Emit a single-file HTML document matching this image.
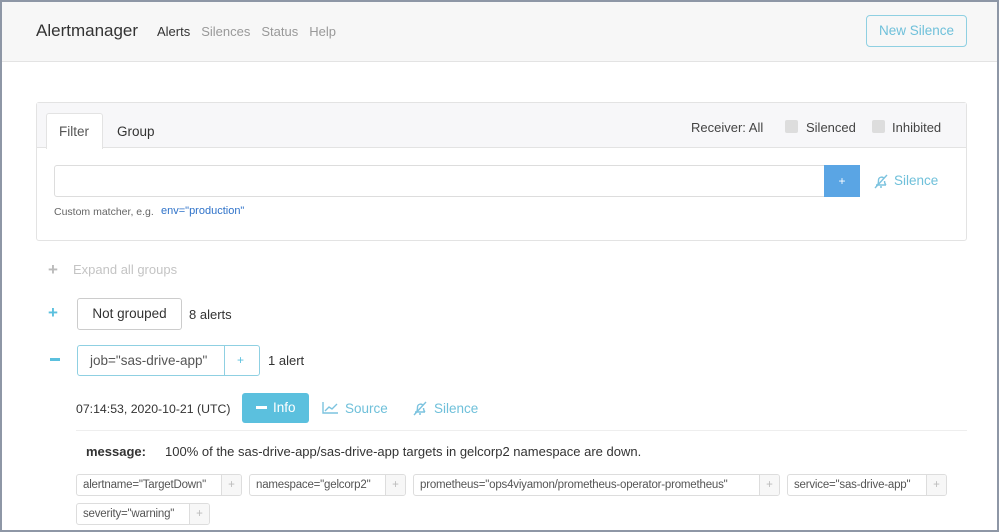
<!DOCTYPE html>
<html><head><style>
*{box-sizing:border-box;margin:0;padding:0}
body{width:999px;height:532px;overflow:hidden;background:#fff;font-family:"Liberation Sans",sans-serif;color:#333;position:relative}
.a{position:absolute;white-space:nowrap}
.frame{position:absolute;left:0;top:0;width:999px;height:532px;border:2px solid #8e97a6;pointer-events:none;z-index:9}
.lbl{position:absolute;height:22px;border:1px solid #ddd;border-radius:3px;font-size:11.5px;color:#555;display:flex;align-items:center;white-space:nowrap;overflow:hidden}
.lbl span{padding:0 6px;white-space:nowrap;letter-spacing:-0.2px}
.lbl b{font-weight:normal;color:#bbb;width:20px;flex:none;height:100%;border-left:1px solid #ddd;background:#f7f7f7;display:flex;align-items:center;justify-content:center}
</style></head><body>
<div class="frame"></div>
<div class="a" style="left:0;top:0;width:999px;height:62px;background:#f7f7f7;border-bottom:1px solid #e3e3e3"></div>
<div class="a" style="left:36px;top:21px;font-size:17px;color:#333">Alertmanager</div>
<div class="a" style="left:157px;top:24px;font-size:13px;color:#333;display:flex;gap:11px"><span>Alerts</span><span style="color:#999">Silences</span><span style="color:#999">Status</span><span style="color:#999">Help</span></div>
<div class="a" style="left:866px;top:15px;width:101px;height:32px;border:1px solid #8fd0e2;border-radius:4px;color:#6fc0da;font-size:13.5px;text-align:center;line-height:30px">New Silence</div>

<div class="a" style="left:36px;top:102px;width:931px;height:139px;border:1px solid #e3e3e3;border-radius:3px"></div>
<div class="a" style="left:37px;top:103px;width:929px;height:45px;background:#f7f7f9;border-bottom:1px solid #e3e3e3"></div>
<div class="a" style="left:46px;top:113px;width:57px;height:36px;background:#fff;border:1px solid #e3e3e3;border-bottom:none;border-radius:3px 3px 0 0"></div>
<div class="a" style="left:59px;top:124px;font-size:13.5px;color:#555">Filter</div>
<div class="a" style="left:117px;top:124px;font-size:13.5px;color:#333">Group</div>
<div class="a" style="left:691px;top:120px;font-size:13px;color:#444">Receiver: All</div>
<div class="a" style="left:785px;top:120px;width:13px;height:13px;background:#ddd;border-radius:2px"></div>
<div class="a" style="left:806px;top:120px;font-size:13px;color:#444">Silenced</div>
<div class="a" style="left:872px;top:120px;width:13px;height:13px;background:#ddd;border-radius:2px"></div>
<div class="a" style="left:892px;top:120px;font-size:13px;color:#444">Inhibited</div>
<div class="a" style="left:54px;top:165px;width:771px;height:32px;border:1px solid #ddd;border-radius:3px 0 0 3px"></div>
<div class="a" style="left:824px;top:165px;width:36px;height:32px;background:#5aa5e4;color:#fff;font-size:12px;text-align:center;line-height:32px">+</div>
<svg class="a" style="left:873px;top:173px" width="16" height="16" viewBox="0 0 16 16" fill="none" stroke="#7cc3df" stroke-width="1.4"><path d="M3 12h10M4.5 12c1-1.5 1-3 1-5a3 3 0 0 1 5.5-1.5M11.5 8c0 2 .5 3 1.5 4M7 14h2M2 15L14 2"/></svg>
<div class="a" style="left:894px;top:173px;font-size:13.5px;color:#6fc0da">Silence</div>
<div class="a" style="left:54px;top:206px;font-size:10.5px;color:#666">Custom matcher, e.g.</div>
<div class="a" style="left:161px;top:205px;font-size:11px;color:#2e72c9">env="production"</div>

<div class="a" style="left:48px;top:260px;font-size:17px;color:#bbb;font-weight:bold">+</div>
<div class="a" style="left:73px;top:262px;font-size:13px;color:#c4c4c4">Expand all groups</div>
<div class="a" style="left:48px;top:303px;font-size:17px;color:#5bc0de;font-weight:bold">+</div>
<div class="a" style="left:77px;top:298px;width:105px;height:32px;border:1px solid #ccc;border-radius:3px;font-size:13.5px;text-align:center;line-height:30px;color:#333">Not grouped</div>
<div class="a" style="left:189px;top:307px;font-size:13px">8 alerts</div>
<div class="a" style="left:50px;top:358px;width:10px;height:3px;background:#5bc0de"></div>
<div class="a" style="left:77px;top:345px;width:183px;height:31px;border:1px solid #8fd0e2;border-radius:3px"></div>
<div class="a" style="left:224px;top:345px;width:1px;height:31px;background:#8fd0e2"></div>
<div class="a" style="left:90px;top:353px;font-size:13.5px;color:#555">job="sas-drive-app"</div>
<div class="a" style="left:237px;top:353px;font-size:12px;color:#5bc0de">+</div>
<div class="a" style="left:268px;top:353px;font-size:13px">1 alert</div>

<div class="a" style="left:76px;top:402px;font-size:12.3px;color:#333">07:14:53, 2020-10-21 (UTC)</div>
<div class="a" style="left:242px;top:393px;width:67px;height:30px;background:#5bc0de;border-radius:3px"></div>
<div class="a" style="left:256px;top:406px;width:11px;height:3px;background:#fff"></div>
<div class="a" style="left:273px;top:400px;font-size:13.5px;color:#fff">Info</div>
<svg class="a" style="left:322px;top:401px" width="17" height="13" viewBox="0 0 17 13" fill="none" stroke="#7cc3df" stroke-width="1.4"><path d="M1 1v11h15M3 10l4-4 3 2 5-5"/></svg>
<div class="a" style="left:345px;top:401px;font-size:13.5px;color:#6fc0da">Source</div>
<svg class="a" style="left:412px;top:400px" width="16" height="16" viewBox="0 0 16 16" fill="none" stroke="#7cc3df" stroke-width="1.4"><path d="M3 12h10M4.5 12c1-1.5 1-3 1-5a3 3 0 0 1 5.5-1.5M11.5 8c0 2 .5 3 1.5 4M7 14h2M2 15L14 2"/></svg>
<div class="a" style="left:434px;top:401px;font-size:13.5px;color:#6fc0da">Silence</div>
<div class="a" style="left:76px;top:430px;width:891px;height:1px;background:#eee"></div>
<div class="a" style="left:86px;top:444px;font-size:13px;font-weight:bold;color:#333">message:</div>
<div class="a" style="left:165px;top:444px;font-size:13px;color:#333">100% of the sas-drive-app/sas-drive-app targets in gelcorp2 namespace are down.</div>

<div class="lbl" style="left:76px;top:474px;width:166px"><span style="flex:1">alertname="TargetDown"</span><b>+</b></div>
<div class="lbl" style="left:249px;top:474px;width:157px"><span style="flex:1">namespace="gelcorp2"</span><b>+</b></div>
<div class="lbl" style="left:413px;top:474px;width:367px"><span style="flex:1">prometheus="ops4viyamon/prometheus-operator-prometheus"</span><b>+</b></div>
<div class="lbl" style="left:787px;top:474px;width:160px"><span style="flex:1">service="sas-drive-app"</span><b>+</b></div>
<div class="lbl" style="left:76px;top:503px;width:134px"><span style="flex:1">severity="warning"</span><b>+</b></div>
</body></html>
